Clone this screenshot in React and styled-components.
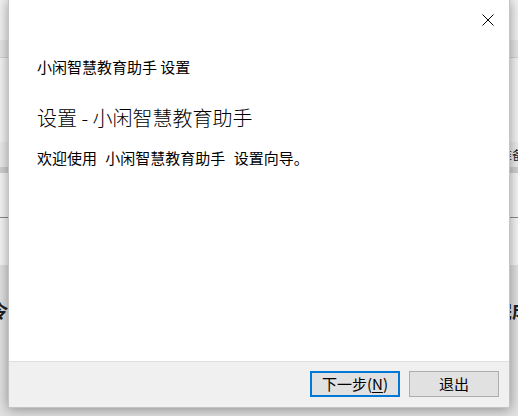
import styled, { createGlobalStyle } from 'styled-components'

const GlobalStyle = createGlobalStyle`
  html, body { margin: 0; padding: 0; }
  body {
    width: 518px;
    height: 416px;
    overflow: hidden;
    font-family: "Noto Sans CJK SC", "Noto Sans", sans-serif;
  }
`

const Screen = styled.div`
  position: relative;
  width: 518px;
  height: 416px;
  overflow: hidden;
  background: #e1e1e1;
`

// page behind the dialog: only its edges show
const Backdrop = styled.div`
  display: flex;
  flex-direction: column;
  height: 100%;
`

const Band = styled.div`
  flex: ${p => (p.$fill ? '1' : 'none')};
  height: ${p => (p.$h ? `${p.$h}px` : 'auto')};
  background: ${p => p.$bg};
  border-bottom: ${p => (p.$line ? `1px solid ${p.$line}` : 'none')};
  display: flex;
  align-items: ${p => p.$align || 'center'};
  justify-content: space-between;
  overflow: hidden;
`

const EdgeText = styled.span`
  font-size: ${p => p.$size}px;
  font-weight: ${p => (p.$bold ? 700 : 400)};
  color: #222;
  white-space: nowrap;
  margin: ${p => p.$margin};
`

const Dialog = styled.div`
  position: absolute;
  left: 8px;
  top: -1px;
  width: 502px;
  height: 409px;
  box-sizing: border-box;
  border: 1px solid #c4c4c4;
  background: #fff;
  box-shadow: 0 0 12px rgba(0, 0, 0, 0.28), 0 4px 10px rgba(0, 0, 0, 0.12);
  display: flex;
  flex-direction: column;
`

const TitleBar = styled.div`
  height: 57px;
  flex: none;
  display: flex;
  justify-content: flex-end;
  align-items: flex-start;
  padding: 14px 15px 0 0;
  box-sizing: border-box;
`

const CloseButton = styled.button`
  width: 12px;
  height: 12px;
  padding: 0;
  border: 0;
  background: none;
  display: flex;

  svg { display: block; }
`

const Body = styled.div`
  flex: 1;
  padding: 0 28px;
  color: #000;
`

const AppName = styled.div`
  font-size: 15px;
  line-height: 20px;
`

const Heading = styled.h1`
  margin: 28px 0 0;
  font-size: 20px;
  line-height: 26px;
  font-weight: 300;
  color: #000;
`

const Welcome = styled.p`
  margin: 17px 0 0;
  font-size: 15px;
  line-height: 20px;
  word-spacing: 5px;
`

const Footer = styled.div`
  height: 46px;
  flex: none;
  box-sizing: border-box;
  border-top: 1px solid #dfdfdf;
  background: #f0f0f0;
  display: flex;
  align-items: center;
  justify-content: flex-end;
  gap: 9px;
  padding: 0 10px 1px 0;
`

const Button = styled.button`
  width: 90px;
  height: 26px;
  box-sizing: border-box;
  padding: 0;
  font-family: "Noto Sans CJK SC", "Noto Sans", sans-serif;
  font-size: 15px;
  line-height: 20px;
  color: #000;
  background: #e1e1e1;
  border: ${p => (p.$primary ? '2px solid #0078d7' : '1px solid #adadad')};
  display: flex;
  align-items: center;
  justify-content: center;

  u { text-underline-offset: 2px; }
`

const App = () => (
  <>
    <GlobalStyle />
    <Screen>
      <Backdrop>
        <Band $h={40} $bg="#f1f1f1" />
        <Band $h={17} $bg="#e6e6e6" $line="#d2d2d2" />
        <Band $h={84} $bg="#f3f3f3" />
        <Band $h={25} $bg="#ebebeb">
          <span />
          <EdgeText $size={12} $margin="0 -6px 0 0">准备</EdgeText>
        </Band>
        <Band $h={6} $bg="#d0d0d0" />
        <Band $h={44} $bg="#f5f5f5" $line="#8a8a8a" />
        <Band $h={47} $bg="#f5f5f5" />
        <Band $fill $bg="#e1e1e1" $align="flex-start">
          <EdgeText $size={18} $bold $margin="32px 0 0 -10px">令</EdgeText>
          <EdgeText $size={18} $bold $margin="32px -12px 0 0">完成</EdgeText>
        </Band>
      </Backdrop>

      <Dialog>
        <TitleBar>
          <CloseButton aria-label="关闭">
            <svg width="12" height="12" viewBox="0 0 12 12">
              <path d="M0.5 0.5L11.5 11.5M11.5 0.5L0.5 11.5" stroke="#000" strokeWidth="1" />
            </svg>
          </CloseButton>
        </TitleBar>
        <Body>
          <AppName>小闲智慧教育助手 设置</AppName>
          <Heading>设置 - 小闲智慧教育助手</Heading>
          <Welcome>欢迎使用 小闲智慧教育助手 设置向导。</Welcome>
        </Body>
        <Footer>
          <Button $primary>下一步(<u>N</u>)</Button>
          <Button>退出</Button>
        </Footer>
      </Dialog>
    </Screen>
  </>
)

export default App
